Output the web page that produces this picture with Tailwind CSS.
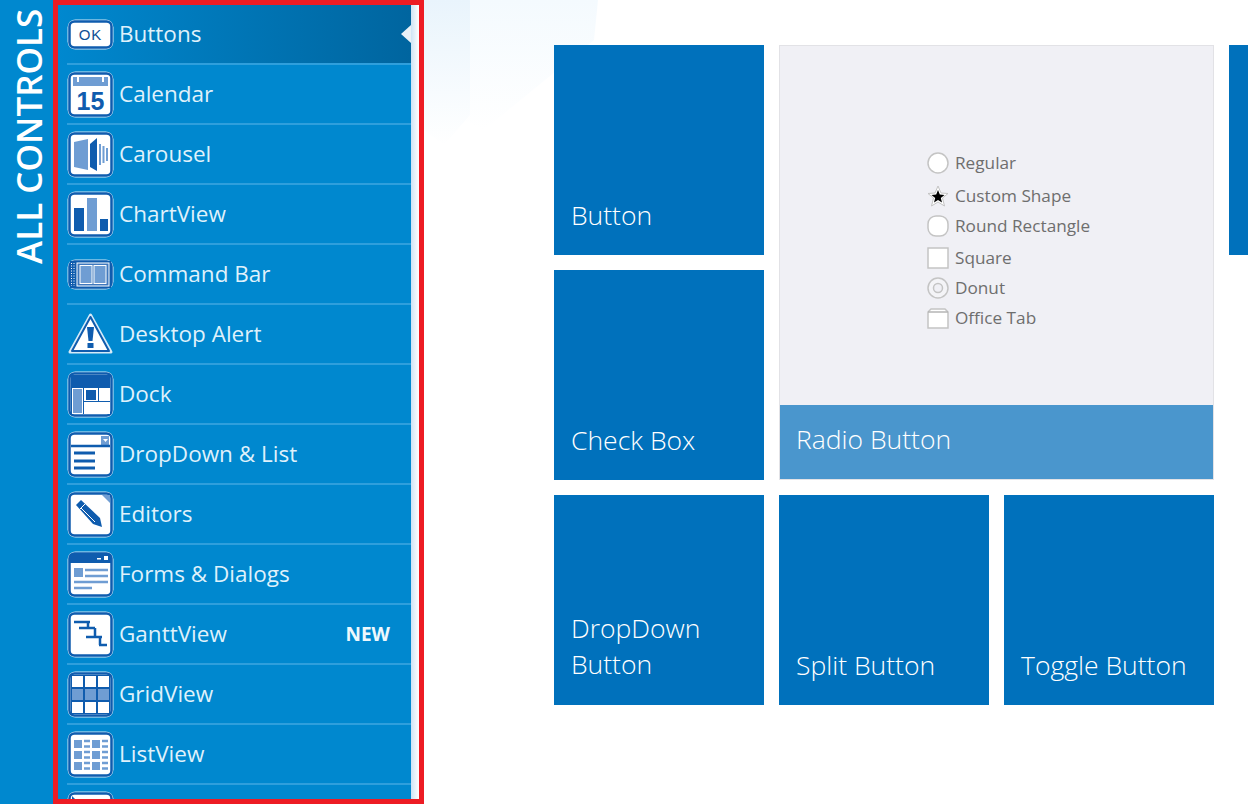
<!DOCTYPE html>
<html lang="en">
<head>
    <meta charset="UTF-8">
    <meta name="viewport" content="width=device-width, initial-scale=1.0">
    <title>All Controls</title>
    <script src="https://cdn.jsdelivr.net/npm/@tailwindcss/browser@4"></script>
</head>
<body class="bg-white font-['Open_Sans',sans-serif] overflow-hidden">
    <div class="relative flex h-[804px] w-[1248px] overflow-hidden">
        <!-- faded corner shapes behind the tiles -->
        <svg class="absolute left-[424px] top-0" width="180" height="150" viewBox="0 0 180 150">
            <defs>
                <linearGradient id="fadeWide" x1="0" y1="0" x2="0" y2="1">
                    <stop offset="0" stop-color="#f4fafe"/>
                    <stop offset="1" stop-color="#ffffff"/>
                </linearGradient>
                <linearGradient id="fadeNarrow" x1="0" y1="0" x2="0" y2="1">
                    <stop offset="0" stop-color="#e9f4fc"/>
                    <stop offset="1" stop-color="#ffffff"/>
                </linearGradient>
            </defs>
            <polygon points="0,0 174,0 170,40 60,130 0,100" fill="url(#fadeWide)"/>
            <polygon points="0,0 46,0 46,115 20,145 0,130" fill="url(#fadeNarrow)"/>
        </svg>

        <div class="flex w-[53px] shrink-0 justify-center bg-[#0088cf] pt-[12px] pl-[3px]">
            <span class="h-[252px] text-[35px] leading-none font-semibold whitespace-nowrap text-white [writing-mode:vertical-rl] rotate-180">ALL CONTROLS</span>
        </div>

        <div class="relative flex h-[804px] w-[371px] shrink-0 border-[5px] border-[#ed1c24]">
            <div id="menu" class="h-full w-[353px] overflow-hidden bg-[#0088cf]"></div>
            <div class="h-full w-[8px] bg-gradient-to-r from-[#cfe4f5] to-white"></div>
        </div>

        <div class="relative ml-[130px] pt-[45px]">
            <div class="grid grid-cols-[210px_210px_210px_210px] grid-rows-[210px_210px_210px] gap-[15px]">
                <div class="flex items-end bg-[#0071bc] pb-[22px] pl-[17px] text-[26.500px] leading-[36px] font-light text-white">Button</div>
                <div class="col-span-2 row-span-2 flex flex-col border border-[#e2e2e6] bg-[#f0f0f5]">
                    <div class="h-[359px] pt-[105px] pl-[147px] text-[17.200px] leading-[24px] text-[#6e6e6e]">
                        <div class="flex h-[24px] items-center gap-[6px]">
                            <svg width="22" height="22" viewBox="0 0 22 22"><circle cx="11" cy="11" r="10" fill="#fff" stroke="#c4c4c4" stroke-width="1.5"/></svg>
                            <span>Regular</span>
                        </div>
                        <div class="mt-[9px] flex h-[24px] items-center gap-[6px]">
                            <svg width="22" height="22" viewBox="0 0 22 22"><polygon points="11,1 14,8 21,8.500 15.500,13 17.500,21 11,17 4.500,21 6.500,13 1,8.500 8,8" fill="#fff" stroke="#c4c4c4"/><polygon points="11,5 12.800,9.500 17.500,10 13.800,13 15,17.500 11,15 7,17.500 8.200,13 4.500,10 9.200,9.500" fill="#000"/></svg>
                            <span>Custom Shape</span>
                        </div>
                        <div class="mt-[6px] flex h-[24px] items-center gap-[6px]">
                            <svg width="22" height="22" viewBox="0 0 22 22"><rect x="1" y="1" width="20" height="20" rx="8" fill="#fff" stroke="#c4c4c4" stroke-width="1.500"/></svg>
                            <span>Round Rectangle</span>
                        </div>
                        <div class="mt-[8px] flex h-[24px] items-center gap-[6px]">
                            <svg width="22" height="22" viewBox="0 0 22 22"><rect x="1" y="1" width="20" height="20" fill="#fff" stroke="#c4c4c4" stroke-width="1.500"/></svg>
                            <span>Square</span>
                        </div>
                        <div class="mt-[6px] flex h-[24px] items-center gap-[6px]">
                            <svg width="22" height="22" viewBox="0 0 22 22"><circle cx="11" cy="11" r="10" fill="#f4f4f7" stroke="#c4c4c4" stroke-width="1.500"/><circle cx="11" cy="11" r="4.500" fill="#f0f0f5" stroke="#c4c4c4" stroke-width="1.500"/></svg>
                            <span>Donut</span>
                        </div>
                        <div class="mt-[6px] flex h-[24px] items-center gap-[6px]">
                            <svg width="22" height="22" viewBox="0 0 22 22"><path d="M1 21V5L4 2H18L21 5V21Z" fill="#fff" stroke="#c4c4c4" stroke-width="1.500"/><path d="M1 5H21" stroke="#b5b5b5" stroke-width="1.500"/></svg>
                            <span>Office Tab</span>
                        </div>
                    </div>
                    <div class="flex h-[74px] items-center bg-[#4a96cd] pb-[4px] pl-[16px] text-[26.500px] font-light text-white">Radio Button</div>
                </div>
                <div class="bg-[#0071bc]"></div>
                <div class="flex items-end bg-[#0071bc] pb-[22px] pl-[17px] text-[26.500px] leading-[36px] font-light text-white">Check Box</div>
                <div></div>
                <div class="flex items-end bg-[#0071bc] pb-[23px] pl-[17px] text-[26.500px] leading-[36px] font-light text-white">DropDown<br>Button</div>
                <div class="flex items-end bg-[#0071bc] pb-[22px] pl-[17px] text-[26.500px] leading-[36px] font-light text-white">Split Button</div>
                <div class="flex items-end bg-[#0071bc] pb-[22px] pl-[17px] text-[26.500px] leading-[36px] font-light text-white">Toggle Button</div>
            </div>
        </div>
    </div>

    <script>
        const dark = '#0f5cae';
        const soft = '#6f9dd3';

        // pale outer edge, dark ring, white inside
        function frame(art, y = 0, h = 47) {
            return `<svg width="47" height="47" viewBox="0 0 47 47">
                <rect x="0.500" y="${y + 0.5}" width="46" height="${h - 1}" rx="8" fill="#d5eaf8"/>
                <rect x="2.500" y="${y + 2.5}" width="42" height="${h - 5}" rx="5" fill="#fff" stroke="${dark}" stroke-width="2.500"/>
                ${art}
            </svg>`;
        }

        const icons = {
            buttons: frame(`<text x="23.500" y="28.500" text-anchor="middle" font-family="Liberation Sans, sans-serif" font-size="15" fill="#0f4f96" letter-spacing="1">OK</text>`, 8, 31),
            calendar: frame(`<rect x="6" y="6" width="35" height="9" fill="${soft}"/>
                <rect x="10" y="5" width="2" height="6" fill="#fff"/><rect x="35" y="5" width="2" height="6" fill="#fff"/>
                <text x="23.500" y="39" text-anchor="middle" font-family="Liberation Sans, sans-serif" font-size="25" font-weight="700" fill="${dark}">15</text>`),
            carousel: frame(`<polygon points="7,11 21,8 21,39 7,36" fill="${soft}"/>
                <polygon points="23,13 30,7 30,40 23,36" fill="${dark}"/>
                <path d="M33 13V34M36.500 15V32M40 17V30" stroke="${soft}" stroke-width="2"/>`),
            chart: frame(`<rect x="7" y="17" width="10" height="23" fill="${dark}"/><rect x="20" y="7" width="10" height="33" fill="${soft}"/><rect x="33" y="28" width="8" height="12" fill="${dark}"/>`),
            command: frame(`<rect x="3" y="10" width="41" height="27" fill="${dark}"/>
                <path d="M4.500 12V35M7 12V35" stroke="#fff" stroke-dasharray="1 1.500"/>
                <rect x="10" y="12" width="32" height="23" fill="#3f78bd" stroke="#fff"/>
                <rect x="13" y="14.500" width="12" height="18" fill="${soft}" stroke="#fff"/><rect x="27" y="14.500" width="12" height="18" fill="${soft}" stroke="#fff"/>`, 8, 31),
            alert: `<svg width="47" height="47" viewBox="0 0 47 47">
                <polygon points="23.500,4 44,41 3,41" fill="#fff" stroke="#d5eaf8" stroke-width="3" stroke-linejoin="round"/>
                <polygon points="23.500,6 42,40 5,40" fill="#fff" stroke="${dark}" stroke-width="2" stroke-linejoin="round"/>
                <polygon points="20,16 27,16 25.500,30 21.500,30" fill="${dark}"/><rect x="20.500" y="32" width="6" height="5" fill="${dark}"/>
            </svg>`,
            dock: frame(`<rect x="4" y="4" width="39" height="39" fill="${dark}"/>
                <rect x="5" y="17" width="11" height="26" fill="#fff"/><rect x="6" y="18" width="9" height="24" fill="${soft}"/>
                <rect x="17" y="17" width="14" height="13" fill="#fff"/><rect x="19" y="19" width="10" height="10" fill="${dark}"/>
                <rect x="32" y="17" width="11" height="13" fill="#fff"/><rect x="17" y="31" width="26" height="12" fill="#fff"/>`),
            dropdown: frame(`<rect x="34" y="5" width="8" height="9" fill="${soft}"/>
                <polygon points="36,8 41,8 38.500,11" fill="#fff"/><path d="M4 15H43" stroke="${dark}" stroke-width="2.500"/>
                <path d="M7 22H28M7 30H28M7 37H28" stroke="${dark}" stroke-width="3"/>`),
            editors: frame(`<polygon points="35,4 43,4 43,12" fill="${soft}"/>
                <polygon points="9,14 14,9 33,27 35,36 26,33" fill="${dark}"/>
                <path d="M14 17L28 31M12.500 18.500L18.500 12.500" stroke="#fff"/>`),
            forms: frame(`<path d="M6 3H41A3 3 0 0 1 44 6V12H3V6A3 3 0 0 1 6 3Z" fill="${dark}"/>
                <rect x="30" y="7" width="4" height="1.500" fill="#fff"/><rect x="37" y="5" width="4" height="4" fill="#fff"/>
                <rect x="7" y="17" width="9" height="9" fill="${soft}"/>
                <path d="M18 19H41M18 25H41M7 31H41M7 37H25" stroke="${soft}" stroke-width="2.500"/>`),
            gantt: frame(`<path d="M7 11H23M21 11V17M12 17H28M28 17V26M19 26H35M33 26V34M32 34H40" stroke="${dark}" stroke-width="2.500" fill="none"/>`),
            grid: frame(`<rect x="4" y="4" width="39" height="39" fill="${dark}"/>
                <g fill="#fff"><rect x="5" y="5" width="11" height="11"/><rect x="18" y="5" width="11" height="11"/><rect x="31" y="5" width="11" height="11"/>
                <rect x="5" y="31" width="11" height="11"/><rect x="18" y="31" width="11" height="11"/><rect x="31" y="31" width="11" height="11"/></g>
                <g fill="${soft}"><rect x="5" y="18" width="11" height="11"/><rect x="18" y="18" width="11" height="11"/><rect x="31" y="18" width="11" height="11"/></g>`),
            list: frame(`<g fill="${soft}"><rect x="7" y="9" width="8" height="8"/><rect x="7" y="20" width="8" height="8"/><rect x="7" y="31" width="8" height="8"/><rect x="25" y="9" width="8" height="8"/><rect x="25" y="20" width="8" height="8"/><rect x="25" y="31" width="8" height="8"/></g>
                <path d="M17 10H23M17 15.500H23M17 21H23M17 26.500H23M17 32H23M17 37.500H23M35 10H41M35 15.500H41M35 21H41M35 26.500H41M35 32H41M35 37.500H41" stroke="${soft}" stroke-width="2.500"/>`),
            more: frame(`<path d="M5 5L9 9H5Z" fill="${dark}"/>`)
        };

        const items = [
            { name: 'Buttons', icon: 'buttons', active: true },
            { name: 'Calendar', icon: 'calendar' },
            { name: 'Carousel', icon: 'carousel' },
            { name: 'ChartView', icon: 'chart' },
            { name: 'Command Bar', icon: 'command' },
            { name: 'Desktop Alert', icon: 'alert' },
            { name: 'Dock', icon: 'dock' },
            { name: 'DropDown &amp; List', icon: 'dropdown' },
            { name: 'Editors', icon: 'editors' },
            { name: 'Forms &amp; Dialogs', icon: 'forms' },
            { name: 'GanttView', icon: 'gantt', badge: 'NEW' },
            { name: 'GridView', icon: 'grid' },
            { name: 'ListView', icon: 'list' },
            { name: '', icon: 'more' }
        ];

        document.getElementById('menu').innerHTML = items.map(item => `
            <div class="relative h-[60px] pl-[9px] ${item.active ? 'bg-gradient-to-r from-[#0088cf] to-[#00659f]' : ''}">
                <div class="flex h-full items-center border-b-2 border-[#2f9fdc] pt-px">
                    ${icons[item.icon]}
                    <span class="ml-[5px] text-[22.500px] leading-none text-[#dff1fb]">${item.name}</span>
                </div>
                ${item.badge ? `<span class="absolute right-[21px] top-[15px] text-[19px] font-bold text-[#eef8fd]">${item.badge}</span>` : ''}
                ${item.active ? '<span class="absolute right-0 top-[20px] h-0 w-0 border-y-[9px] border-r-[10px] border-y-transparent border-r-[#e8f1f8]"></span>' : ''}
            </div>
        `).join('');
    </script>
</body>
</html>
